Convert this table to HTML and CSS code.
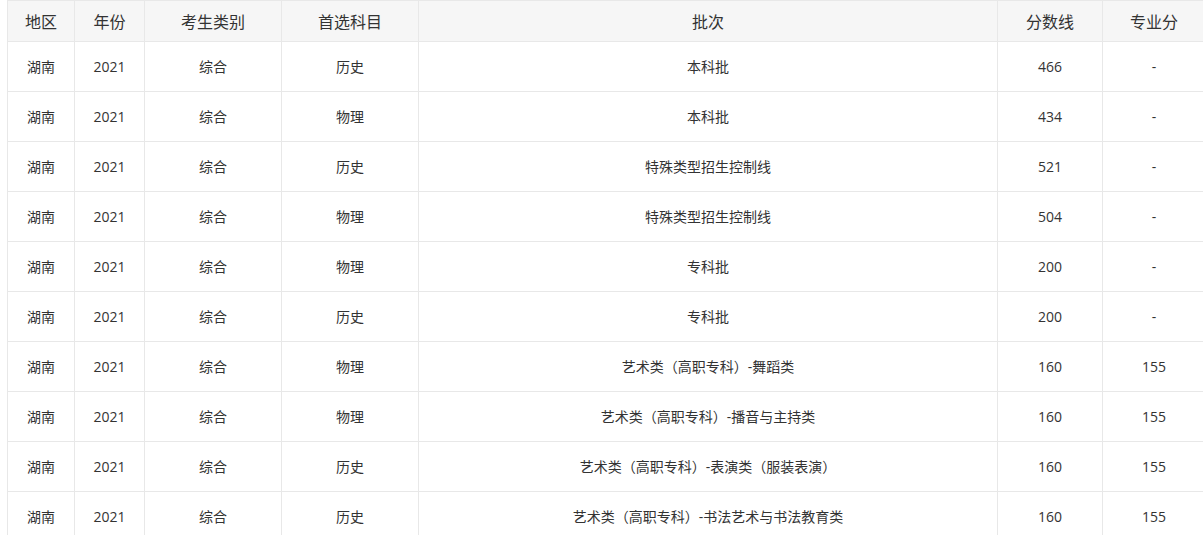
FILE: index.html
```html
<!DOCTYPE html>
<html lang="zh-CN">
<head>
<meta charset="utf-8">
<title>分数线</title>
<link rel="stylesheet" href="styles.css">
</head>
<body>
<div class="wrap">
<table class="score-table">
<colgroup>
<col class="c1"><col class="c2"><col class="c3"><col class="c4"><col class="c5"><col class="c6"><col class="c7">
</colgroup>
<thead>
<tr><th>地区</th><th>年份</th><th>考生类别</th><th>首选科目</th><th>批次</th><th>分数线</th><th>专业分</th></tr>
</thead>
<tbody>
<tr><td>湖南</td><td>2021</td><td>综合</td><td>历史</td><td>本科批</td><td>466</td><td>-</td></tr>
<tr><td>湖南</td><td>2021</td><td>综合</td><td>物理</td><td>本科批</td><td>434</td><td>-</td></tr>
<tr><td>湖南</td><td>2021</td><td>综合</td><td>历史</td><td>特殊类型招生控制线</td><td>521</td><td>-</td></tr>
<tr><td>湖南</td><td>2021</td><td>综合</td><td>物理</td><td>特殊类型招生控制线</td><td>504</td><td>-</td></tr>
<tr><td>湖南</td><td>2021</td><td>综合</td><td>物理</td><td>专科批</td><td>200</td><td>-</td></tr>
<tr><td>湖南</td><td>2021</td><td>综合</td><td>历史</td><td>专科批</td><td>200</td><td>-</td></tr>
<tr><td>湖南</td><td>2021</td><td>综合</td><td>物理</td><td>艺术类（高职专科）-舞蹈类</td><td>160</td><td>155</td></tr>
<tr><td>湖南</td><td>2021</td><td>综合</td><td>物理</td><td>艺术类（高职专科）-播音与主持类</td><td>160</td><td>155</td></tr>
<tr><td>湖南</td><td>2021</td><td>综合</td><td>历史</td><td>艺术类（高职专科）-表演类（服装表演）</td><td>160</td><td>155</td></tr>
<tr><td>湖南</td><td>2021</td><td>综合</td><td>历史</td><td>艺术类（高职专科）-书法艺术与书法教育类</td><td>160</td><td>155</td></tr>
</tbody>
</table>
</div>
</body>
</html>
```

FILE: styles.css
```css
html, body {
  margin: 0;
  padding: 0;
  background: #fff;
  overflow: hidden;
}
body {
  font-family: "Open Sans", "Noto Sans CJK SC", sans-serif;
  color: #333;
}
.wrap {
  padding-left: 7px;
  width: 1196px;
  overflow: hidden;
}
.score-table {
  border-collapse: collapse;
  table-layout: fixed;
  width: 1198px;
}
.c1 { width: 67px; }
.c2 { width: 70px; }
.c3 { width: 137px; }
.c4 { width: 137px; }
.c5 { width: 579px; }
.c6 { width: 105px; }
.c7 { width: 103px; }
.score-table th,
.score-table td {
  border: 1px solid #e8e8e8;
  text-align: center;
  padding: 0 0 1px;
  white-space: nowrap;
}
.score-table thead tr {
  height: 41px;
}
.score-table th {
  background: #f6f6f6;
  font-weight: normal;
  font-size: 16px;
  color: #333;
}
.score-table tbody tr {
  height: 50px;
}
.score-table td {
  font-size: 14px;
  color: #333;
}
```
